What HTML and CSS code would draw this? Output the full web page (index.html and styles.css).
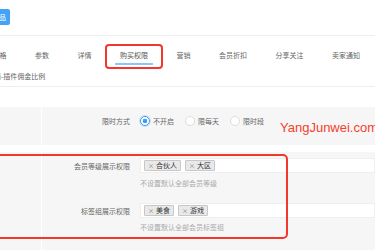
FILE: index.html
```html
<!DOCTYPE html>
<html lang="zh-CN">
<head>
  <meta charset="UTF-8">
  <meta name="viewport" content="width=device-width, initial-scale=1">
  <title>编辑商品 - 购买权限</title>
  <link rel="stylesheet" href="styles.css">
</head>
<body>

<div class="header">
  <button class="add-btn" type="button">商品</button>
</div>

<div class="tabs">
  <div class="tab-row">
    <span class="tab">价格</span>
    <span class="tab">参数</span>
    <span class="tab">详情</span>
    <span class="tab active">购买权限</span>
    <span class="tab">营销</span>
    <span class="tab">会员折扣</span>
    <span class="tab">分享关注</span>
    <span class="tab">卖家通知</span>
  </div>
  <div class="tab-row tab-row-2">
    <span class="tab">分销-插件佣金比例</span>
  </div>
</div>

<div class="form">
  <div class="section section-first">
    <div class="side"></div>
    <div class="main">
      <div class="row">
        <label class="label">限时方式</label>
        <div class="radios">
          <span class="radio checked"><i></i>不开启</span>
          <span class="radio"><i></i>限每天</span>
          <span class="radio"><i></i>限时段</span>
        </div>
      </div>
    </div>
  </div>

  <div class="section">
    <div class="side"></div>
    <div class="main main-perm">
      <div class="field">
        <div class="row">
          <label class="label">会员等级展示权限</label>
          <div class="input">
            <span class="tag"><b>×</b>合伙人</span>
            <span class="tag"><b>×</b>大区</span>
          </div>
        </div>
        <div class="hint">不设置默认全部会员等级</div>
      </div>
      <div class="field">
        <div class="row">
          <label class="label">标签组展示权限</label>
          <div class="input">
            <span class="tag"><b>×</b>美食</span>
            <span class="tag"><b>×</b>游戏</span>
          </div>
        </div>
        <div class="hint">不设置默认全部会员标签组</div>
      </div>
    </div>
  </div>
</div>

<!-- annotations drawn over the screenshot -->
<div class="mark mark-tab"></div>
<div class="mark mark-form"></div>
<div class="watermark">YangJunwei.com</div>

</body>
</html>
```

FILE: styles.css
```css
* {
  box-sizing: border-box;
  margin: 0;
  padding: 0;
}

html, body {
  overflow: hidden;
}

body {
  position: relative;
  height: 250px;
  background: #fff;
  font-family: "Noto Sans CJK SC", "Noto Sans", sans-serif;
  font-size: 7px;
  color: #666;
}

.header {
  height: 36px;
  padding-top: 9px;
  border-bottom: 1px solid #eee;
}

.add-btn {
  display: block;
  margin-left: -12px;
  height: 16px;
  padding: 0 4px;
  border: none;
  border-radius: 2px;
  background: #45a3f5;
  color: #fff;
  font-family: inherit;
  font-size: 7px;
  line-height: 16px;
}

.tabs {
  padding: 13px 0 4px;
  border-bottom: 1px solid #eee;
}

.tab-row {
  display: flex;
  margin-left: -21.75px;
  white-space: nowrap;
}

.tab {
  flex-shrink: 0;
  margin: 0 9.25px;
  padding: 0 5px 2px;
  line-height: 12px;
  border-bottom: 2px solid transparent;
}

.tab.active {
  color: #555;
  border-bottom-color: #8ec5f8;
}

.tab-row-2 {
  margin-top: 5px;
  margin-left: -27.5px;
}

.tab-row-2 .tab {
  padding-bottom: 0;
  border-bottom: none;
}

.form {
  margin-top: 20px;
}

.section {
  display: flex;
}

.section + .section {
  margin-top: 7px;
}

.side {
  width: 42px;
  flex-shrink: 0;
  background: #f6f6f6;
  border-right: 1px solid #fff;
}

.main {
  flex: 1;
  background: #f6f6f6;
}

.section-first .main {
  padding: 7px 0 17px;
}

.main-perm {
  padding: 6px 0 30px;
}

.row {
  display: flex;
  align-items: center;
}

.label {
  flex-shrink: 0;
  width: 88px;
  margin-right: 10px;
  text-align: right;
  line-height: 14px;
  color: #666;
}

.radios {
  display: flex;
}

.radio {
  display: flex;
  align-items: center;
  margin-right: 11px;
  line-height: 14px;
}

.radio i {
  width: 10px;
  height: 10px;
  margin-right: 3px;
  border: 1px solid #ddd;
  border-radius: 50%;
  background: #fff;
}

.radio.checked i {
  border-color: #3d9cf5;
  background: radial-gradient(circle, #3d9cf5 0 2px, #fff 2.6px);
  box-shadow: 0 0 0 1px rgba(61, 156, 245, 0.25);
}

.field + .field {
  margin-top: 15px;
}

.input {
  flex: 1;
  display: flex;
  align-items: center;
  gap: 4px;
  height: 15px;
  padding-left: 3px;
  background: #fff;
  border: 1px solid #eee;
}

.tag {
  height: 11px;
  padding: 0 3px;
  line-height: 9px;
  white-space: nowrap;
  color: #333;
  background: #e9e9e9;
  border: 1px solid #c8c8c8;
  border-radius: 1px;
}

.tag b {
  margin-right: 2px;
  font-weight: normal;
  font-size: 6px;
  color: #777;
}

.hint {
  margin: 5px 0 0 98px;
  line-height: 10px;
  color: #aaa;
}

.field + .field .hint {
  margin-top: 4px;
}

.mark {
  position: absolute;
  border: 2px solid #f2372b;
  border-radius: 4px;
}

.mark-tab {
  left: 105px;
  top: 44px;
  width: 58px;
  height: 25px;
}

.mark-form {
  left: -10px;
  top: 154px;
  width: 298px;
  height: 85px;
  border-radius: 5px;
}

.watermark {
  position: absolute;
  left: 280px;
  top: 120px;
  font-family: "Liberation Sans", Arial, sans-serif;
  font-size: 13px;
  line-height: 15px;
  color: #f4402f;
  white-space: nowrap;
}
```
